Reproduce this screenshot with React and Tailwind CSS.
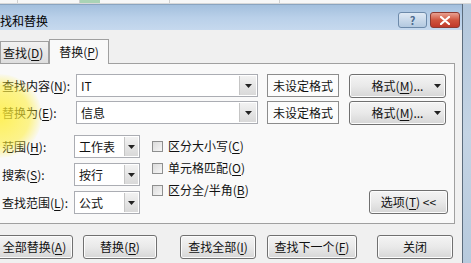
import clsx from 'clsx'

const Arrow = ({ className }) => (
  <svg width="7" height="4" viewBox="0 0 7 4" className={className}>
    <path d="M0 0h7L3.5 4z" fill="#222" />
  </svg>
)

const Key = ({ k }) => (
  <>
    (<u className="underline-offset-2">{k}</u>)
  </>
)

const Btn = ({ children, className }) => (
  <div
    className={clsx(
      'flex items-center justify-center h-[24px] rounded-[3px] border border-[#707070] bg-linear-to-b from-[#f4f4f4] via-[#e9e9e9] to-[#d6d6d6] text-[12px] text-[#111] shadow-[inset_0_0_0_1px_#fcfcfc]',
      className
    )}
  >
    {children}
  </div>
)

const Combo = ({ value, className, btn = 'w-[17px]' }) => (
  <div className={clsx('flex h-[23px] border border-[#abadb3] bg-white', className)}>
    <div className="flex-1 flex items-center pl-[4px] text-[12px] text-[#111]">{value}</div>
    <div className={clsx('flex items-center justify-center border-l border-[#c5c5c5] bg-linear-to-b from-[#f2f2f2] to-[#d9d9d9] m-[1px]', btn)}>
      <Arrow />
    </div>
  </div>
)

const Check = ({ children }) => (
  <div className="flex items-center h-[22px] text-[12px] text-[#111]">
    <div className="w-[11px] h-[11px] border border-[#8e8f8f] bg-linear-to-br from-[#dcdcdc] to-[#f6f6f6] mr-[5px]" />
    {children}
  </div>
)

export default function App() {
  return (
    <div className="relative w-[471px] h-[263px] overflow-hidden bg-[#f0f0f0] font-['Noto_Sans_CJK_SC',sans-serif] leading-none">
      <div className="flex h-[4px] bg-[#f7f7f7] border-b border-[#d8d8d8]">
        <div className="w-[18px] border-r border-[#cfcfcf]" />
        <div className="w-[62px] border-r border-[#cfcfcf]" />
        <div className="w-[20px] bg-[#a9d3b5]" />
        <div className="w-[70px] border-r border-[#cfcfcf]" />
        <div className="w-[110px] border-r border-[#cfcfcf]" />
      </div>
      <div className="flex h-[259px]">
        <div className="w-[462px] flex flex-col">
          {/* title bar */}
          <div className="h-[26px] flex items-start bg-linear-to-b from-[#a3bfdd] via-[#b9d0e9] to-[#c6d9ee] border-t border-[#8aa4c0]">
            <span className="mt-[10px] text-[12px] text-black">找和替换</span>
            <div className="ml-auto mt-[7px] flex gap-[3px] mr-[2px]">
              <div className="w-[29px] h-[16px] rounded-[3px] border border-[#6d8aaa] bg-linear-to-b from-[#dfe9f4] to-[#b3c9e0] flex items-center justify-center text-[11px] font-bold text-[#4c6a8e]">
                ?
              </div>
              <div className="w-[30px] h-[16px] rounded-[3px] border border-[#8d3a32] bg-linear-to-b from-[#e8a091] via-[#d0553f] to-[#c0392b] flex items-center justify-center">
                <svg width="10" height="9" viewBox="0 0 10 9">
                  <path d="M1 1l8 7M9 1L1 8" stroke="white" strokeWidth="2.2" strokeLinecap="round" />
                </svg>
              </div>
            </div>
          </div>

          {/* tabs */}
          <div className="flex items-end h-[33px] pt-[4px]">
            <div className="w-[49px] h-[22px] flex items-center pl-[2px] border border-b-0 border-[#a0a0a0] bg-linear-to-b from-[#f2f2f2] to-[#dedede] text-[12px] text-[#111]">
              查找<Key k="D" />
            </div>
            <div className="relative z-10 -mb-px w-[60px] h-[25px] flex items-center justify-center border border-b-0 border-[#a0a0a0] bg-[#f9f9f9] text-[12px] text-[#111]">
              替换<Key k="P" />
            </div>
          </div>

          {/* panel */}
          <div className="w-[455px] border-t border-r border-b border-[#a0a0a0] bg-[#f9f9f9] pt-[10px] pb-[9px] pl-[2px]">
            <div className="flex items-center h-[23px]">
              <div className="w-[74px] text-[12px] text-[#111]">查找内容<Key k="N" />:</div>
              <Combo value="IT" className="w-[182px]" />
              <div className="ml-[9px] w-[72px] h-[23px] flex items-center justify-center border border-[#8c8c8c] bg-[#fcfcfc] text-[12px] text-[#111]">未设定格式</div>
              <Btn className="ml-[10px] w-[97px] h-[22px] relative">
                格式<Key k="M" />...
                <Arrow className="absolute right-[4px] top-[9px]" />
              </Btn>
            </div>
            <div className="flex items-center h-[23px] mt-[4px]">
              <div className="w-[74px] text-[12px] text-[#111]">替换为<Key k="E" />:</div>
              <Combo value="信息" className="w-[182px]" />
              <div className="ml-[9px] w-[72px] h-[23px] flex items-center justify-center border border-[#8c8c8c] bg-[#fcfcfc] text-[12px] text-[#111]">未设定格式</div>
              <Btn className="ml-[10px] w-[97px] h-[22px] relative">
                格式<Key k="M" />...
                <Arrow className="absolute right-[4px] top-[9px]" />
              </Btn>
            </div>

            <div className="flex mt-[11px]">
              <div className="flex flex-col gap-[5px]">
                <div className="flex items-center h-[23px]">
                  <div className="w-[72px] text-[12px] text-[#111]">范围<Key k="H" />:</div>
                  <Combo value="工作表" className="w-[66px]" btn="w-[14px]" />
                </div>
                <div className="flex items-center h-[23px]">
                  <div className="w-[72px] text-[12px] text-[#111]">搜索<Key k="S" />:</div>
                  <Combo value="按行" className="w-[66px]" btn="w-[14px]" />
                </div>
                <div className="flex items-center h-[23px]">
                  <div className="w-[72px] text-[12px] text-[#111]">查找范围<Key k="L" />:</div>
                  <Combo value="公式" className="w-[66px]" btn="w-[14px]" />
                </div>
              </div>
              <div className="ml-[12px] flex flex-col">
                <Check>区分大小写<Key k="C" /></Check>
                <Check>单元格匹配<Key k="O" /></Check>
                <Check>区分全/半角<Key k="B" /></Check>
              </div>
              <div className="ml-auto mr-[6px] self-end">
                <Btn className="w-[79px]">
                  选项<Key k="T" />&nbsp;&lt;&lt;
                </Btn>
              </div>
            </div>
          </div>

          {/* bottom buttons */}
          <div className="flex mt-[11px]">
            <Btn className="-ml-[4px] w-[77px]">全部替换<Key k="A" /></Btn>
            <Btn className="ml-[10px] w-[74px]">替换<Key k="R" /></Btn>
            <Btn className="ml-[23px] w-[76px]">查找全部<Key k="I" /></Btn>
            <Btn className="ml-[11px] w-[90px] border-[#3c7fb1] shadow-[inset_0_0_0_1px_#8fd1f2]">查找下一个<Key k="F" /></Btn>
            <Btn className="ml-[20px] w-[76px]">关闭</Btn>
          </div>
        </div>
        <div className="w-[9px] border-l border-[#5d6d7d] bg-linear-to-b from-[#b3c7dc] via-[#c4d4e4] to-[#b7cadd]" />
      </div>

      {/* cursor highlight */}
      <div className="pointer-events-none absolute left-[-42px] top-[74px] w-[84px] h-[84px] rounded-full bg-[radial-gradient(circle,rgba(255,238,50,0.8)_0%,rgba(255,238,50,0.55)_50%,rgba(255,238,50,0.15)_66%,rgba(255,238,50,0)_72%)]" />
    </div>
  )
}
